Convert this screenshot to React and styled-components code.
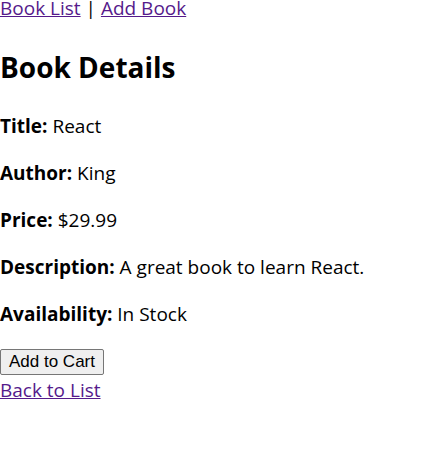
import React from "react";
import styled, { createGlobalStyle } from "styled-components";

const GlobalStyle = createGlobalStyle`
  body {
    margin: 0;
    background: #fff;
    color: #000;
    font-family: "Open Sans", "Noto Sans", sans-serif;
  }
`;

const Page = styled.div`
  margin-top: -5px;
  font-size: 19px;
`;

const Nav = styled.nav`
  line-height: 27px;
`;

const Link = styled.a`
  color: #551a8b;
  text-decoration: underline;
  cursor: pointer;
`;

const Title = styled.h1`
  font-size: 28px;
  line-height: 38px;
  font-weight: 700;
  margin: 26px 0 27px;
`;

const Field = styled.p`
  margin: 20px 0;
  line-height: 27px;
`;

const Label = styled.strong`
  font-weight: 700;
`;

const CartButton = styled.button`
  display: block;
  margin-top: 21px;
  height: 26px;
  padding: 0 8px;
  font-family: "Liberation Sans", Arial, sans-serif;
  font-size: 17px;
  color: #000;
  background: #efefef;
  border: 1px solid #767676;
  border-radius: 2px;
`;

const BackLine = styled.div`
  line-height: 30px;
`;

const book = {
  title: "React",
  author: "King",
  price: "$29.99",
  description: "A great book to learn React.",
  availability: "In Stock",
};

export default function App() {
  return (
    <>
      <GlobalStyle />
      <Page>
        <Nav>
          <Link href="#">Book List</Link> | <Link href="#">Add Book</Link>
        </Nav>
        <Title>Book Details</Title>
        <Field>
          <Label>Title:</Label> {book.title}
        </Field>
        <Field>
          <Label>Author:</Label> {book.author}
        </Field>
        <Field>
          <Label>Price:</Label> {book.price}
        </Field>
        <Field>
          <Label>Description:</Label> {book.description}
        </Field>
        <Field>
          <Label>Availability:</Label> {book.availability}
        </Field>
        <CartButton type="button">Add to Cart</CartButton>
        <BackLine>
          <Link href="#">Back to List</Link>
        </BackLine>
      </Page>
    </>
  );
}
